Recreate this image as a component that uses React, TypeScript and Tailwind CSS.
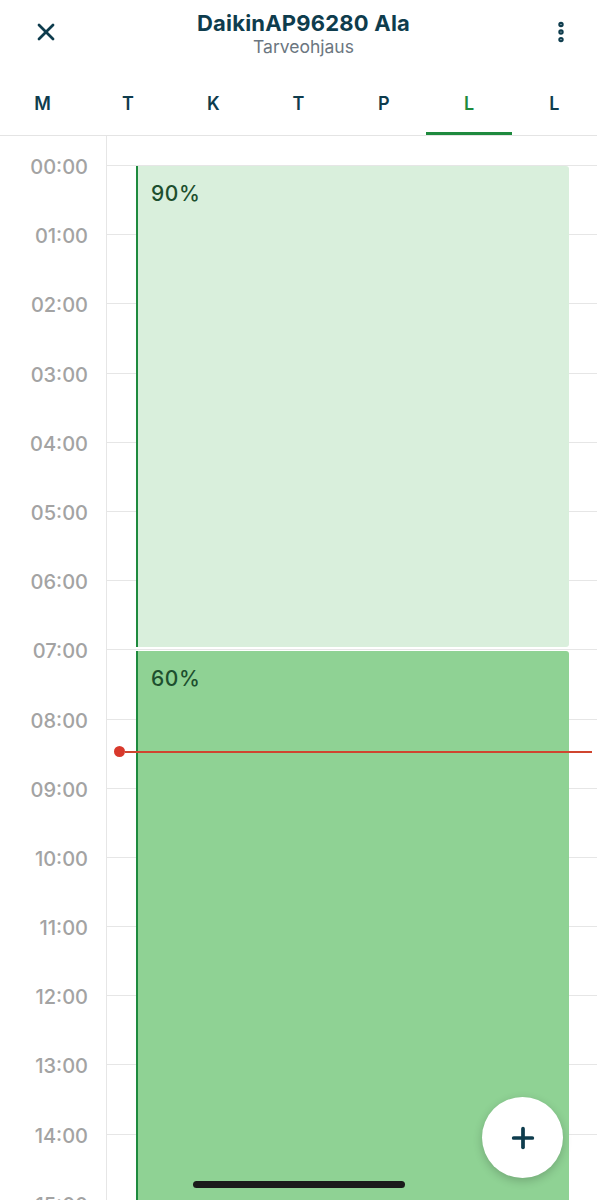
import { X, EllipsisVertical, Plus } from 'lucide-react';

const days = ['M', 'T', 'K', 'T', 'P', 'L', 'L'];
const hours = Array.from({ length: 16 }, (_, i) => `${String(i).padStart(2, '0')}:00`);

const HOUR = 69.2;

export default function App() {
  return (
    <div
      className="relative w-[597px] h-[1200px] overflow-hidden bg-white"
      style={{ fontFamily: 'Inter, "Noto Sans", sans-serif' }}
    >
      {/* header */}
      <div className="flex items-start justify-between h-[68px] px-[30px] pt-[10px]">
        <button className="w-[32px] h-[44px] flex items-center justify-center text-[#0e3c4d]">
          <X size={28} strokeWidth={2.4} />
        </button>
        <div className="flex flex-col items-center">
          <h1 className="text-[22px] leading-[26px] font-bold text-[#0e3c4d] tracking-[0.2px]">
            DaikinAP96280 Ala
          </h1>
          <span className="text-[17.5px] leading-[22px] text-[#6b7680]">Tarveohjaus</span>
        </div>
        <button className="w-[32px] h-[44px] flex items-center justify-center text-[#0e3c4d] -mr-[10px]">
          <EllipsisVertical size={26} strokeWidth={3} />
        </button>
      </div>

      {/* day tabs */}
      <div className="grid grid-cols-7 h-[68px] border-b border-[#e4e4e4]">
        {days.map((d, i) => (
          <div key={i} className="relative flex items-center justify-center pt-[3px]">
            <span
              className={`text-[18px] font-semibold ${i === 5 ? 'text-[#1e8a3e]' : 'text-[#0e3c4d]'}`}
            >
              {d}
            </span>
            {i === 5 && <div className="absolute bottom-0 left-0 right-0 h-[3px] bg-[#1e8a3e]" />}
          </div>
        ))}
      </div>

      {/* timeline */}
      <div className="relative flex pt-[29px]">
        <div className="w-[107px] shrink-0 border-r border-[#e6e6e6] absolute left-0 top-0 h-[1200px]" />
        <div className="flex flex-col w-full">
          {hours.map((h) => (
            <div key={h} className="flex" style={{ height: HOUR }}>
              <div className="w-[107px] shrink-0 relative">
                <span className="absolute right-[19px] -top-[11px] text-[20px] leading-[26px] font-medium text-[#a3a3a3]">
                  {h}
                </span>
              </div>
              <div className="flex-1 border-t border-[#e6e6e6]" />
            </div>
          ))}
        </div>

        {/* events */}
        <div
          className="absolute left-[136px] w-[433px] bg-[#d9efdc] rounded-r-[3px] border-l-[2.5px] border-[#1e8a3e] pl-[13px] pt-[12px]"
          style={{ top: 30, height: 481 }}
        >
          <span className="text-[21px] font-medium tracking-[0.6px] text-[#1d4f2e]">90%</span>
        </div>
        <div
          className="absolute left-[136px] w-[433px] bg-[#8fd294] rounded-r-[3px] border-l-[2.5px] border-[#1e8a3e] pl-[13px] pt-[12px]"
          style={{ top: 515, height: 700 }}
        >
          <span className="text-[21px] font-medium tracking-[0.6px] text-[#1d4f2e]">60%</span>
        </div>

        {/* now line */}
        <div className="absolute left-[114px] right-[5px] flex items-center" style={{ top: 610 }}>
          <div className="w-[11px] h-[11px] rounded-full bg-[#d8392c] shrink-0" />
          <div className="flex-1 h-[2px] bg-[#d0452f]" />
        </div>
      </div>

      {/* fab */}
      <button className="absolute left-[482px] top-[1097px] w-[81px] h-[81px] rounded-full bg-white shadow-[0_3px_10px_rgba(0,0,0,0.2)] flex items-center justify-center text-[#0e3c4d]">
        <Plus size={32} strokeWidth={2.8} />
      </button>

      {/* home indicator */}
      <div className="absolute left-[193px] top-[1181px] w-[212px] h-[7px] rounded-full bg-[#1b1b1b]" />
    </div>
  );
}
